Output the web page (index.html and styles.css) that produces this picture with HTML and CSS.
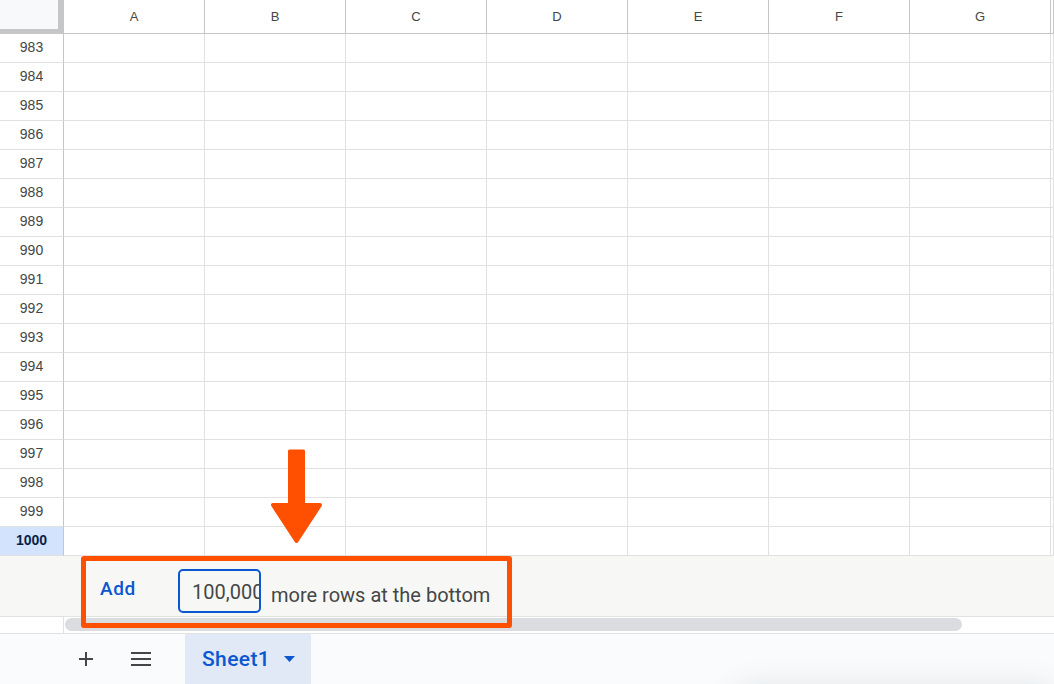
FILE: index.html
```html
<!DOCTYPE html>
<html>
<head>
<meta charset="utf-8">
<link rel="stylesheet" href="styles.css">
</head>
<body>
<div class="sheet">
  <div class="grid">
    <div class="corner"></div><div class="ch">A</div><div class="ch">B</div><div class="ch">C</div><div class="ch">D</div><div class="ch">E</div><div class="ch">F</div><div class="ch">G</div><div class="ch"></div>
    <div class="rh">983</div><div class="c"></div><div class="c"></div><div class="c"></div><div class="c"></div><div class="c"></div><div class="c"></div><div class="c"></div><div class="c"></div>
    <div class="rh">984</div><div class="c"></div><div class="c"></div><div class="c"></div><div class="c"></div><div class="c"></div><div class="c"></div><div class="c"></div><div class="c"></div>
    <div class="rh">985</div><div class="c"></div><div class="c"></div><div class="c"></div><div class="c"></div><div class="c"></div><div class="c"></div><div class="c"></div><div class="c"></div>
    <div class="rh">986</div><div class="c"></div><div class="c"></div><div class="c"></div><div class="c"></div><div class="c"></div><div class="c"></div><div class="c"></div><div class="c"></div>
    <div class="rh">987</div><div class="c"></div><div class="c"></div><div class="c"></div><div class="c"></div><div class="c"></div><div class="c"></div><div class="c"></div><div class="c"></div>
    <div class="rh">988</div><div class="c"></div><div class="c"></div><div class="c"></div><div class="c"></div><div class="c"></div><div class="c"></div><div class="c"></div><div class="c"></div>
    <div class="rh">989</div><div class="c"></div><div class="c"></div><div class="c"></div><div class="c"></div><div class="c"></div><div class="c"></div><div class="c"></div><div class="c"></div>
    <div class="rh">990</div><div class="c"></div><div class="c"></div><div class="c"></div><div class="c"></div><div class="c"></div><div class="c"></div><div class="c"></div><div class="c"></div>
    <div class="rh">991</div><div class="c"></div><div class="c"></div><div class="c"></div><div class="c"></div><div class="c"></div><div class="c"></div><div class="c"></div><div class="c"></div>
    <div class="rh">992</div><div class="c"></div><div class="c"></div><div class="c"></div><div class="c"></div><div class="c"></div><div class="c"></div><div class="c"></div><div class="c"></div>
    <div class="rh">993</div><div class="c"></div><div class="c"></div><div class="c"></div><div class="c"></div><div class="c"></div><div class="c"></div><div class="c"></div><div class="c"></div>
    <div class="rh">994</div><div class="c"></div><div class="c"></div><div class="c"></div><div class="c"></div><div class="c"></div><div class="c"></div><div class="c"></div><div class="c"></div>
    <div class="rh">995</div><div class="c"></div><div class="c"></div><div class="c"></div><div class="c"></div><div class="c"></div><div class="c"></div><div class="c"></div><div class="c"></div>
    <div class="rh">996</div><div class="c"></div><div class="c"></div><div class="c"></div><div class="c"></div><div class="c"></div><div class="c"></div><div class="c"></div><div class="c"></div>
    <div class="rh">997</div><div class="c"></div><div class="c"></div><div class="c"></div><div class="c"></div><div class="c"></div><div class="c"></div><div class="c"></div><div class="c"></div>
    <div class="rh">998</div><div class="c"></div><div class="c"></div><div class="c"></div><div class="c"></div><div class="c"></div><div class="c"></div><div class="c"></div><div class="c"></div>
    <div class="rh">999</div><div class="c"></div><div class="c"></div><div class="c"></div><div class="c"></div><div class="c"></div><div class="c"></div><div class="c"></div><div class="c"></div>
    <div class="rh rh-sel">1000</div><div class="c"></div><div class="c"></div><div class="c"></div><div class="c"></div><div class="c"></div><div class="c"></div><div class="c"></div><div class="c"></div>
  </div>

  <div class="add-bar">
    <span class="add-link">Add</span>
    <div class="add-input"><span>100,000</span></div>
    <span class="add-text">more rows at the bottom</span>
  </div>

  <div class="scroll-row">
    <div class="scroll-spacer"></div>
    <div class="scroll-track"><div class="scroll-thumb"></div></div>
  </div>

  <div class="tabs">
    <div class="tab-icon plus">
      <svg width="16" height="16" viewBox="0 0 16 16"><path d="M8 1v14M1 8h14" stroke="#444746" stroke-width="2" fill="none"/></svg>
    </div>
    <div class="tab-icon menu">
      <svg width="20" height="16" viewBox="0 0 20 16"><path d="M0 2h20M0 8h20M0 14h20" stroke="#444746" stroke-width="2" fill="none"/></svg>
    </div>
    <div class="sheet-tab">
      <span class="sheet-name">Sheet1</span>
      <svg class="caret" width="11" height="6" viewBox="0 0 11 6"><path d="M0 0h11L5.5 6z" fill="#0b57d0"/></svg>
    </div>
  </div>

  <div class="shadow"></div>
  <div class="highlight-box"></div>
  <svg class="arrow" width="60" height="100" viewBox="0 0 60 100">
    <path d="M19.5 2h14v53h-14z" fill="#fe5000" stroke="#fe5000" stroke-width="3" stroke-linejoin="round"/>
    <path d="M3 56h47L26.5 92z" fill="#fe5000" stroke="#fe5000" stroke-width="4" stroke-linejoin="round"/>
  </svg>
</div>
</body>
</html>
```

FILE: styles.css
```css
* { box-sizing: border-box; }
html, body { margin: 0; padding: 0; }
body {
  width: 1054px;
  height: 684px;
  overflow: hidden;
  background: #ffffff;
  font-family: "Liberation Sans", Arial, sans-serif;
  color: #444746;
}
.sheet {
  position: relative;
  width: 1054px;
  height: 684px;
  overflow: hidden;
  display: flex;
  flex-direction: column;
}
.grid {
  display: grid;
  grid-template-columns: 64px repeat(7, 141px) 1fr;
  grid-template-rows: 34px repeat(18, 29px);
}
.corner {
  background: #f8f9fa;
  border-right: 6px solid #c4c7c5;
  border-bottom: 5px solid #c4c7c5;
}
.ch {
  border-right: 1px solid #c4c7c5;
  border-bottom: 1px solid #c4c7c5;
  display: flex;
  align-items: center;
  justify-content: center;
  font-size: 13px;
  color: #444746;
  padding-bottom: 1px;
}
.rh {
  border-right: 1px solid #c4c7c5;
  border-bottom: 1px solid #e1e1e1;
  display: flex;
  align-items: center;
  justify-content: center;
  font-size: 14px;
  color: #444746;
  padding-bottom: 2px;
}
.rh-sel {
  background: #d3e3fd;
  color: #0b1f4a;
  font-weight: bold;
}
.c {
  border-right: 1px solid #e1e1e1;
  border-bottom: 1px solid #e1e1e1;
}
.add-bar {
  height: 61px;
  background: #f7f8f6;
  border-bottom: 1px solid #e1e3e1;
  display: flex;
  align-items: flex-start;
  padding-left: 100px;
  font-family: Roboto, "Liberation Sans", Arial, sans-serif;
}
.add-link {
  margin-top: 22px;
  width: 36px;
  font-size: 19px;
  line-height: 22px;
  font-weight: 500;
  letter-spacing: 0.6px;
  color: #0b57d0;
}
.add-input {
  margin-top: 13px;
  margin-left: 42px;
  width: 83px;
  height: 44px;
  border: 2px solid #0b57d0;
  border-radius: 5px;
  overflow: hidden;
  padding-left: 12px;
  padding-top: 1px;
  font-size: 20px;
  line-height: 40px;
  white-space: nowrap;
  color: #444746;
}
.add-text {
  margin-top: 28px;
  margin-left: 10px;
  font-size: 20px;
  line-height: 22px;
  color: #444746;
}
.scroll-row {
  height: 17px;
  display: flex;
  border-bottom: 1px solid #e1e3e1;
  background: #ffffff;
}
.scroll-spacer {
  width: 64px;
  border-right: 1px solid #e1e1e1;
}
.scroll-track {
  flex: 1;
  padding: 1px 0 0 1px;
}
.scroll-thumb {
  width: 897px;
  height: 13px;
  border-radius: 7px;
  background: #dadce0;
}
.tabs {
  flex: 1;
  background: #f9fbfd;
  display: flex;
  align-items: stretch;
  font-family: Roboto, "Liberation Sans", Arial, sans-serif;
}
.tab-icon {
  display: flex;
  align-items: center;
  justify-content: center;
}
.plus { margin-left: 78px; width: 16px; }
.menu { margin-left: 37px; width: 20px; }
.sheet-tab {
  margin-left: 34px;
  width: 126px;
  background: #e1e9f7;
  display: flex;
  align-items: center;
  padding-left: 17px;
  padding-bottom: 1px;
}
.sheet-name {
  font-size: 21px;
  font-weight: 500;
  letter-spacing: 0.4px;
  color: #0b57d0;
}
.caret { margin-left: 14px; margin-top: 1px; }
.shadow {
  position: absolute;
  left: 740px;
  top: 692px;
  width: 310px;
  height: 40px;
  border-radius: 8px;
  background: #ffffff;
  box-shadow: 0 0 30px 6px rgba(60, 64, 67, 0.12);
}
.highlight-box {
  position: absolute;
  left: 81px;
  top: 556px;
  width: 431px;
  height: 72px;
  border: 5px solid #fe5000;
  border-radius: 3px;
}
.arrow {
  position: absolute;
  left: 270px;
  top: 449px;
}
```
